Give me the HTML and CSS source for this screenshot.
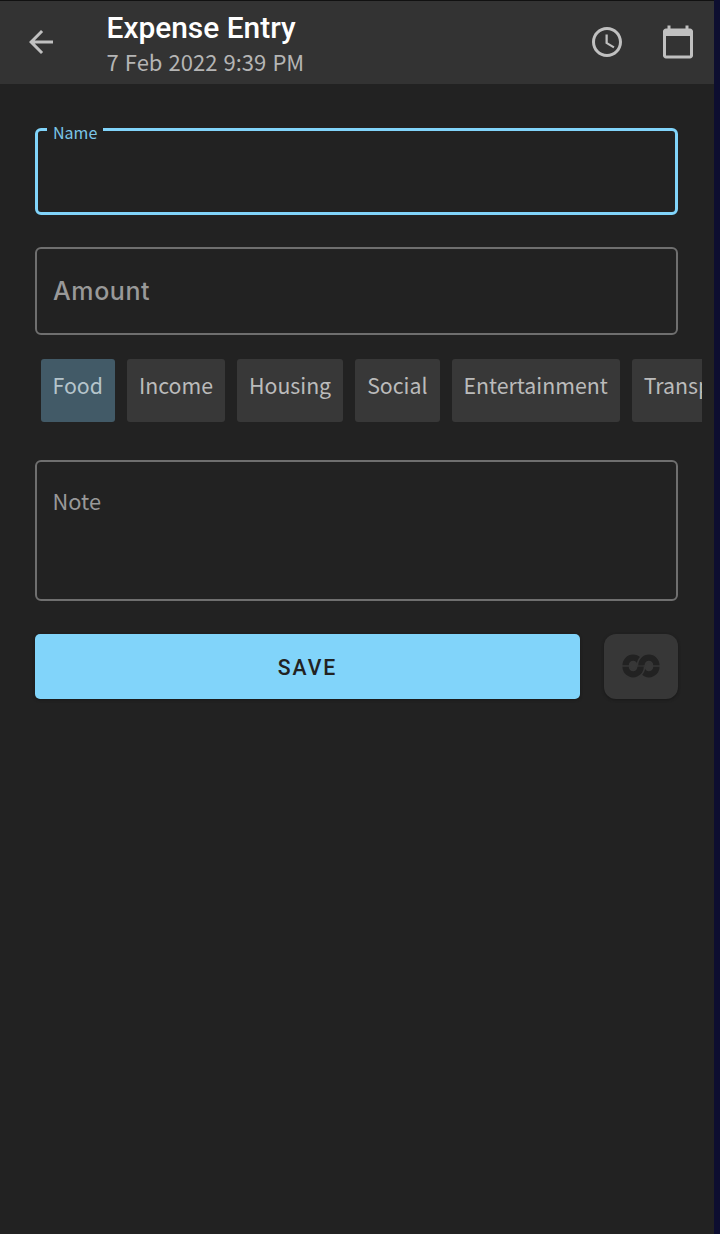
FILE: index.html
```html
<!DOCTYPE html>
<html lang="en">
<head>
<meta charset="utf-8">
<title>Expense Entry</title>
<link rel="stylesheet" href="styles.css">
</head>
<body>
<main class="screen">
  <header class="bar">
    <svg class="back" viewBox="0 0 24 24"><path d="M20 11H7.83l5.59-5.59L12 4l-8 8 8 8 1.41-1.41L7.83 13H20z"/></svg>
    <div class="heading">
      <h1 class="title">Expense Entry</h1>
      <p class="date">7 Feb 2022 9:39 PM</p>
    </div>
    <svg class="clock" viewBox="0 0 24 24"><path d="M11.99 2C6.47 2 2 6.48 2 12s4.47 10 9.99 10C17.52 22 22 17.52 22 12S17.52 2 11.99 2zM12 20c-4.42 0-8-3.58-8-8s3.58-8 8-8 8 3.58 8 8-3.58 8-8 8zm.5-13H11v6l5.25 3.15.75-1.23-4.5-2.67z"/></svg>
    <svg class="calendar" viewBox="0 0 24 24"><path d="M20 3h-1V1h-2v2H7V1H5v2H4c-1.1 0-2 .9-2 2v16c0 1.1.9 2 2 2h16c1.1 0 2-.9 2-2V5c0-1.1-.9-2-2-2zm0 18H4V8h16v13z"/></svg>
  </header>
  <form class="form">
    <fieldset class="field focused"><legend class="legend"><span class="legend-text">Name</span></legend></fieldset>
    <div class="field amount"><span class="amount-label">Amount</span></div>
    <div class="chips">
      <span class="chip selected">Food</span>
      <span class="chip">Income</span>
      <span class="chip">Housing</span>
      <span class="chip">Social</span>
      <span class="chip">Entertainment</span>
      <span class="chip">Transport</span>
    </div>
    <div class="field note">Note</div>
    <div class="actions">
      <button class="save" type="button">SAVE</button>
      <button class="link" type="button" aria-label="Link">
        <svg class="rings" viewBox="0 0 38 24">
          <path class="arc" d="M3.6 11.2a7.5 7.5 0 0 1 15 0"/>
          <path class="halo" d="M19.4 11.2a7.5 7.5 0 0 1 15 0"/>
          <path class="arc" d="M19.4 11.2a7.5 7.5 0 0 1 15 0"/>
          <path class="arc" d="M19.4 12.8a7.5 7.5 0 0 0 15 0"/>
          <path class="halo" d="M3.6 12.8a7.5 7.5 0 0 0 15 0"/>
          <path class="arc" d="M3.6 12.8a7.5 7.5 0 0 0 15 0"/>
        </svg>
      </button>
    </div>
  </form>
</main>
</body>
</html>
```
FILE: styles.css
```css
* { box-sizing: border-box; }
body { margin: 0; background: #0d0e30; font-family: "Noto Sans CJK JP", "Noto Sans", sans-serif; }
.screen { width: 714px; height: 1234px; background: #222; border-top: 1px solid #111; overflow: hidden; }
.bar { height: 83px; background: #333; display: flex; align-items: center; padding: 0 18px 0 23px; }
.bar svg { fill: #c0c0c0; flex: none; margin-bottom: .5px; }
.back { width: 36px; height: 36px; }
.heading { flex: 1; margin-left: 47.5px; white-space: nowrap; }
.title { margin: 0; padding-top: 4px; font: 500 29.9px/34px Roboto, sans-serif; color: #fff; }
.date { margin: 0; font-size: 22px; line-height: 33px; word-spacing: 1.2px; color: #b5b5b5; }
.bar .clock { width: 36px; height: 36px; margin-right: 35px; }
.calendar { width: 36px; height: 36px; }
.form { padding: 44px 36px 0 35px; }
.field { border: 2px solid #6f6f6f; border-radius: 6px; margin: 0; color: #999; }
.focused { height: 92px; margin-top: -5px; border: 3px solid #81d4fa; padding: 0 9px; }
.legend { height: 12px; padding: 0 6px; font-size: 16px; line-height: 12px; color: #7bc6e8; }
.legend-text { display: block; padding-top: 3px; }
.amount { height: 88px; margin-top: 32px; padding: 0 16px; display: flex; align-items: center; }
.amount-label { font: 500 25px/30px Inter, sans-serif; letter-spacing: .6px; }
.chips { display: flex; gap: 12px; margin: 24px -24px 0 0; padding-left: 5.5px; overflow: hidden; }
.chip { flex: none; height: 63px; padding: 0 12px; border-radius: 3px; background: #383838; color: #bbb; font-size: 21.3px; line-height: 52px; }
.selected { background: #425a67; color: #b5c4cb; }
.note { height: 141px; margin-top: 38px; padding: 22px 15.5px; font-size: 21.8px; line-height: 34px; }
.actions { display: flex; gap: 24px; margin-top: 33px; }
.save, .link { border: 0; height: 65px; box-shadow: 0 1px 3px #181818; }
.save { flex: 1; border-radius: 5px; background: #81d4fa; color: #222; font: 500 21.2px Roboto, sans-serif; letter-spacing: 1.9px; padding-top: 3px; }
.link { width: 74px; padding: 0 0 1px; border-radius: 12px; background: #373737; display: flex; align-items: center; justify-content: center; }
.rings { width: 38px; height: 24px; }
.arc, .halo { fill: none; stroke: #222; stroke-width: 6.3; }
.halo { stroke: #373737; stroke-width: 9.4; }
```
